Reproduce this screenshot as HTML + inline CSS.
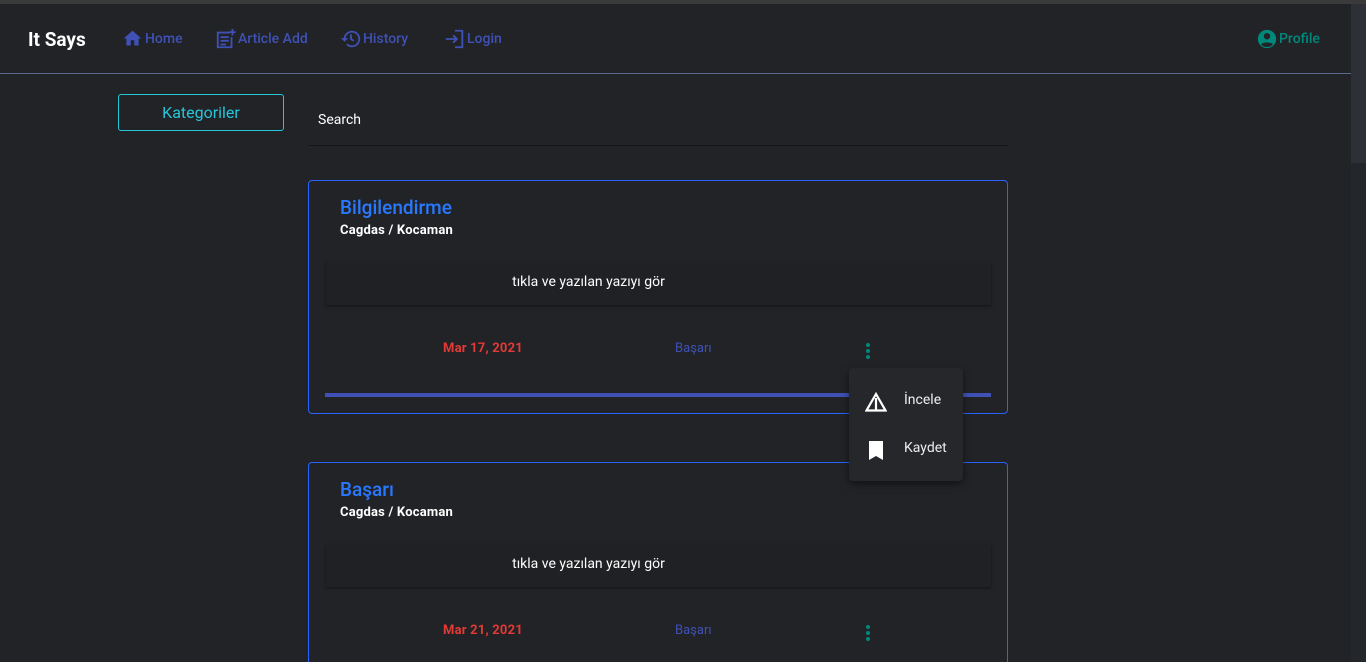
<!DOCTYPE html>
<html style="height:662px;overflow:hidden"><head><meta charset="utf-8"><style>
*{margin:0;padding:0;box-sizing:border-box}
body{width:1366px;height:662px;overflow:hidden;background:#212327;font-family:"Roboto","Liberation Sans",sans-serif;position:relative;color:#fff}
.abs{position:absolute}
.top{left:0;top:0;width:1366px;height:4px;background:#3a3a3a}
.hdr{left:0;top:4px;width:1351px;height:70px;border-bottom:1px solid #5a6a8a}
.nav{color:#3f51b5;font-size:14px;font-weight:500;display:flex;align-items:center;gap:1px;top:28px}
.card{border:1px solid #2962ff;border-radius:4px;left:308px;width:700px}
.t{color:#2979ff;font-size:19px;font-weight:500;position:absolute;left:31px;top:15px}
.a{font-size:13px;font-weight:700;position:absolute;left:31px;top:42px;letter-spacing:.2px}
.box{position:absolute;left:17px;width:665px;height:42px;background:#1f2124;box-shadow:0 1px 3px rgba(0,0,0,.5);font-size:14px;text-align:center;line-height:38px;padding-right:140px}
.d{position:absolute;color:#e53935;font-size:13px;font-weight:700;left:134px;letter-spacing:.2px}
.c{position:absolute;color:#3f51b5;font-size:13px;left:366px}
.dots{position:absolute;left:557px;width:4px}
.dots i{display:block;width:4px;height:4px;border-radius:2px;background:#00897b;margin-bottom:2px}
</style></head><body>
<div class="abs top"></div>
<div class="abs hdr"></div>
<div class="abs" style="left:28px;top:28px;font-size:19px;font-weight:700">It Says</div>
<div class="abs nav" style="left:121px"><svg width="23" height="21" viewBox="0 0 24 24"><path fill="#3f51b5" d="M10 20v-6h4v6h5v-8h3L12 3 2 12h3v8z"/></svg>Home</div>
<div class="abs nav" style="left:215px"><svg width="22" height="22" viewBox="0 0 24 24"><path fill="none" stroke="#3f51b5" stroke-width="2" d="M16 5H3v16h15V10M6 10h9M6 14h9M6 18h6"/><path stroke="#3f51b5" stroke-width="2" d="M19 1v7M15.5 4.5h7"/></svg>Article Add</div>
<div class="abs nav" style="left:340px"><svg width="22" height="22" viewBox="0 0 24 24"><path fill="none" stroke="#3f51b5" stroke-width="2" d="M5 12a8 8 0 1 1 2.5 5.8M12 7v5l3 2"/><path fill="#3f51b5" d="M1 11h8l-4 4z"/></svg> History</div>
<div class="abs nav" style="left:444px"><svg width="22" height="22" viewBox="0 0 24 24"><path fill="none" stroke="#3f51b5" stroke-width="2" d="M12 3h8v18h-8M2 12h12M10 8l4 4-4 4"/></svg> Login</div>
<div class="abs nav" style="left:1256px;color:#00897b"><svg width="22" height="22" viewBox="0 0 24 24"><circle cx="12" cy="12" r="10" fill="#00897b"/><circle cx="12" cy="9" r="3.5" fill="#212327"/><path fill="#212327" d="M5.5 18c2-3 11-3 13 0a9 9 0 0 1-13 0z"/></svg>Profile</div>
<div class="abs" style="left:1351px;top:4px;width:15px;height:658px;background:#23262a"></div>
<div class="abs" style="left:1351px;top:4px;width:15px;height:159px;background:#2d3036"></div>

<div class="abs" style="left:118px;top:94px;width:166px;height:37px;border:1px solid #26c6da;border-radius:3px;color:#26c6da;font-size:16px;text-align:center;line-height:35px">Kategoriler</div>
<div class="abs" style="left:318px;top:112px;font-size:14px">Search</div>
<div class="abs" style="left:308px;top:145px;width:700px;height:1px;background:#15171a"></div>

<div class="abs card" style="top:180px;height:234px">
<div class="t">Bilgilendirme</div><div class="a">Cagdas / Kocaman</div>
<div class="box" style="top:82px">tıkla ve yazılan yazıyı gör</div>
<div class="d" style="top:160px">Mar 17, 2021</div><div class="c" style="top:160px">Başarı</div>
<div class="dots" style="top:162px"><i></i><i></i><i></i></div>
<div style="position:absolute;left:16px;top:212px;width:666px;height:4px;background:#3f51b5"></div>
</div>
<div class="abs card" style="top:462px;height:230px">
<div class="t">Başarı</div><div class="a">Cagdas / Kocaman</div>
<div class="box" style="top:82px">tıkla ve yazılan yazıyı gör</div>
<div class="d" style="top:160px">Mar 21, 2021</div><div class="c" style="top:160px">Başarı</div>
<div class="dots" style="top:162px"><i></i><i></i><i></i></div>
</div>

<div class="abs" style="left:849px;top:368px;width:114px;height:113px;background:#25272b;border-radius:4px;box-shadow:0 3px 8px rgba(0,0,0,.5)">
<svg style="position:absolute;left:16px;top:24px" width="22" height="20" viewBox="0 0 22 20"><path fill="none" stroke="#fff" stroke-width="2.2" d="M11 2L1.5 18.5h19zM11 6v12"/></svg>
<div style="position:absolute;left:55px;top:24px;font-size:14px;color:#eee">İncele</div>
<svg style="position:absolute;left:19px;top:73px" width="16" height="19" viewBox="0 0 16 19"><path fill="#fff" d="M1 0h14v19l-7-4-7 4z"/></svg>
<div style="position:absolute;left:55px;top:72px;font-size:14px;color:#eee">Kaydet</div>
</div>
</body></html>
